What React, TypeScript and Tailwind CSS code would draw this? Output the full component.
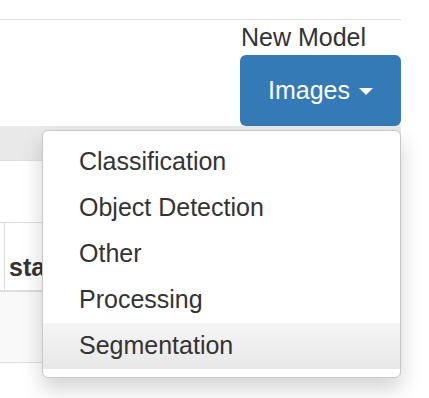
import React from "react";

export default function App() {
  const items = ["Classification", "Object Detection", "Other", "Processing", "Segmentation"];
  return (
    <div
      className="relative w-[429px] h-[398px] overflow-hidden bg-white text-[#333]"
      style={{ fontFamily: '"Liberation Sans", Arial, sans-serif' }}
    >
      <div className="w-[401px]">
        <div className="h-[19px]" />
        <div className="h-px bg-[#dddddd]" />
        <div className="flex justify-end">
          <div className="flex flex-col w-[161px]">
            <div className="text-[25px] leading-[35px] pl-px">New Model</div>
            <div className="relative">
              <button className="flex items-center justify-center gap-[9px] w-[161px] h-[71px] rounded-[6px] bg-[#337ab7] text-white text-[25px] leading-[35px]">
                <span>Images</span>
                <svg width="14" height="7" viewBox="0 0 14 7" className="mt-[2px]">
                  <path d="M0 0 L14 0 L7 7 Z" fill="white" />
                </svg>
              </button>
              <div className="absolute right-0 top-[75px] z-10 w-[359px] rounded-[6px] border border-[#c8c8c8] bg-white py-[8px] shadow-[0_11px_21px_rgba(0,0,0,0.175)]">
                {items.map((it) => (
                  <div
                    key={it}
                    className={
                      "h-[46px] pl-[36px] text-[25px] leading-[44px] " +
                      (it === "Segmentation" ? "bg-linear-to-b from-[#f5f5f5] to-[#e8e8e8]" : "")
                    }
                  >
                    {it}
                  </div>
                ))}
              </div>
            </div>
          </div>
        </div>
        <div className="h-[35px] bg-[#e9e9e9] border-b border-[#dddddd]" />
        <div className="h-[61px]" />
        <div className="h-[70px] border-t border-b-2 border-[#dddddd] flex">
          <div className="w-[5px] border-r border-[#dddddd]" />
          <div className="pl-[4px] pt-[27px] text-[25px] leading-[35px] font-bold">status</div>
        </div>
        <div className="h-[71px] bg-[#f9f9f9] border-b border-[#dddddd]" />
      </div>
    </div>
  );
}
